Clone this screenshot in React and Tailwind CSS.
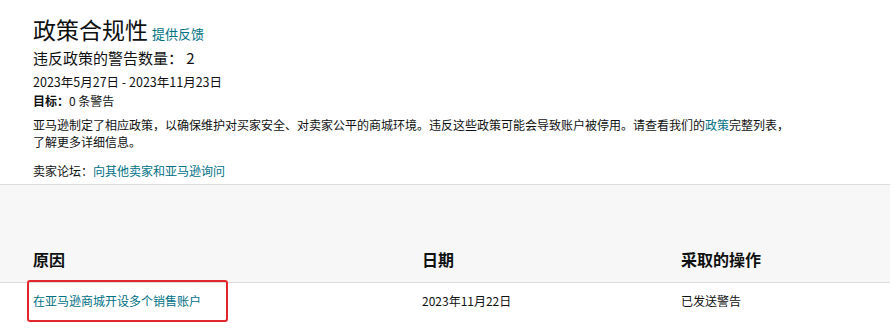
import React from 'react';

const PolicyCompliance = () => {
  const rows = [
    { reason: '在亚马逊商城开设多个销售账户', date: '2023年11月22日', action: '已发送警告', flagged: true },
  ];

  return (
    <div className="w-[890px] h-[335px] overflow-hidden bg-white text-[#0f1111] font-['Noto_Sans_CJK_SC','Noto_Sans',sans-serif]">
      {/* Summary */}
      <div className="pl-[33px] pt-[14px]">
        <div className="flex items-baseline gap-[4px]">
          <h1 className="text-[23px] leading-[30px] font-normal">政策合规性</h1>
          <a className="text-[13px] text-[#007185]">提供反馈</a>
        </div>
        <p className="mt-[3px] text-[15px] leading-[22px]">违反政策的警告数量： 2</p>
        <p className="mt-[4px] text-[12.5px] leading-[18px]">2023年5月27日 - 2023年11月23日</p>
        <p className="mt-[1px] text-[12px] leading-[18px]">
          <span className="font-bold">目标：</span>0 条警告
        </p>
        <p className="mt-[6px] max-w-[762px] text-[12px] leading-[17px]">
          亚马逊制定了相应政策，以确保维护对买家安全、对卖家公平的商城环境。违反这些政策可能会导致账户被停用。请查看我们的<a className="text-[#007185]">政策</a>完整列表，了解更多详细信息。
        </p>
        <p className="mt-[12px] text-[12px] leading-[18px]">
          卖家论坛：<a className="text-[#007185]">向其他卖家和亚马逊询问</a>
        </p>
      </div>

      {/* Warnings table */}
      <div className="mt-[4px] border-t border-[#dddddd]">
        <div className="grid grid-cols-[422px_259px_1fr] h-[98px] items-end bg-[#f7f7f7] border-b border-[#dddddd] pb-[12px]">
          <div className="pl-[33px] text-[16px] leading-[22px] font-bold">原因</div>
          <div className="text-[16px] leading-[22px] font-bold">日期</div>
          <div className="text-[16px] leading-[22px] font-bold">采取的操作</div>
        </div>
        {rows.map((row, idx) => (
          <div key={idx} className="grid grid-cols-[422px_259px_1fr] pt-[9px] text-[12px] leading-[18px]">
            <div className="relative pl-[33px]">
              <a className="text-[#007185]">{row.reason}</a>
              {row.flagged && (
                <div className="absolute left-[27px] top-[-12px] w-[201px] h-[42px] rounded-[3px] border-2 border-[#e3262c]"></div>
              )}
            </div>
            <div>{row.date}</div>
            <div>{row.action}</div>
          </div>
        ))}
      </div>
    </div>
  );
};

export default PolicyCompliance;
